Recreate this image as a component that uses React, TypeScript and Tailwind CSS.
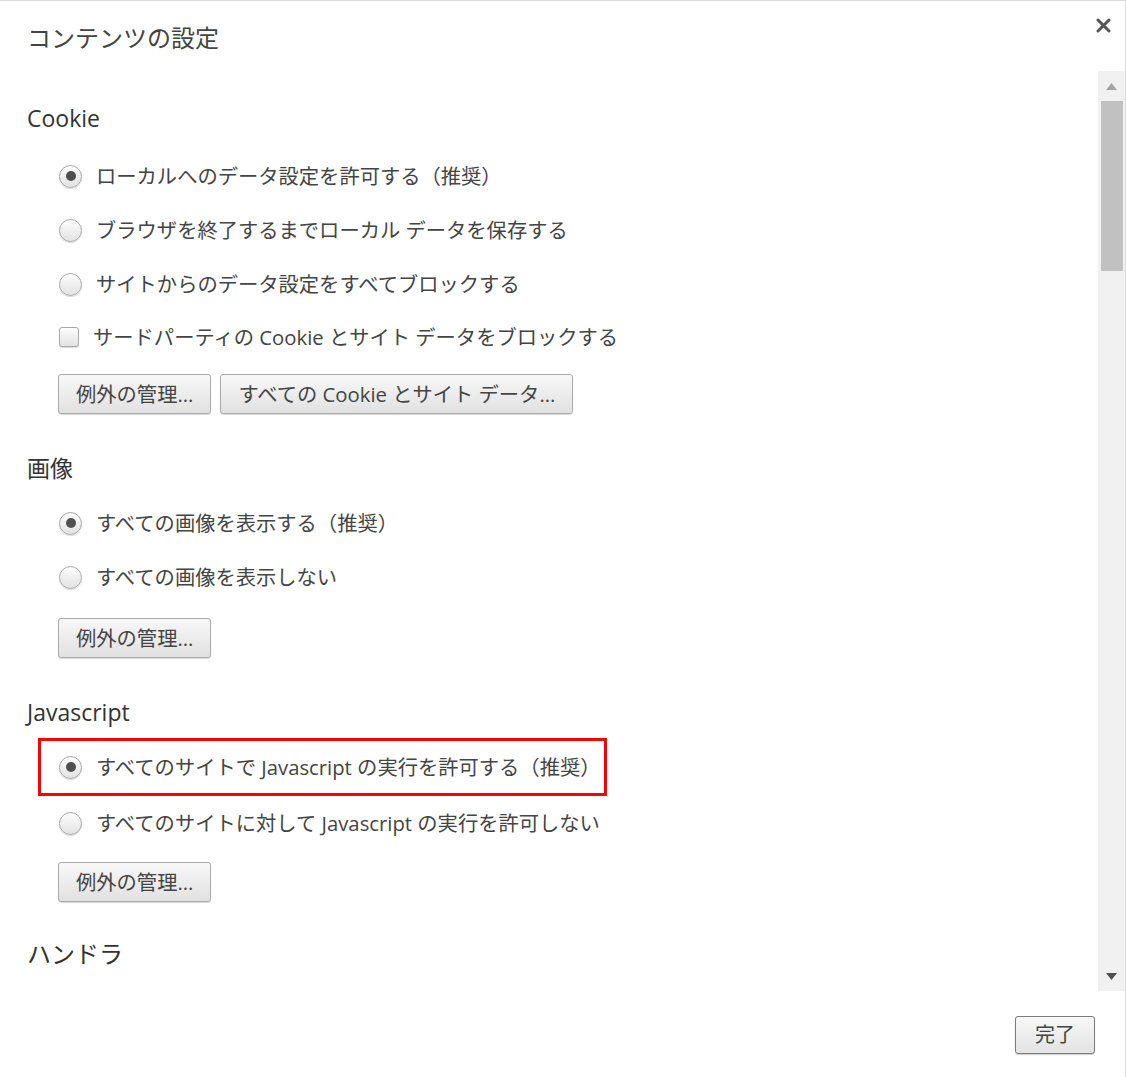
import React from "react";

const Radio = ({ checked }: { checked?: boolean }) => (
  <span className="w-[23px] h-[23px] rounded-full border border-[#a8a8a8] bg-gradient-to-b from-[#fdfdfd] to-[#e2e2e2] shadow-[0_1px_1px_rgba(0,0,0,0.15)] flex items-center justify-center shrink-0">
    {checked && <span className="w-[10px] h-[10px] rounded-full bg-[#4f4f4f]" />}
  </span>
);

const Checkbox = () => (
  <span className="w-[20px] h-[20px] rounded-[3px] border border-[#a8a8a8] bg-gradient-to-b from-[#fdfdfd] to-[#e2e2e2] shadow-[0_1px_1px_rgba(0,0,0,0.15)] shrink-0" />
);

const Btn = ({ children, className = "" }: { children: React.ReactNode; className?: string }) => (
  <button
    className={
      "h-[40px] px-[17px] rounded-[3px] border border-[#aaaaaa] bg-gradient-to-b from-[#f8f8f8] to-[#e1e1e1] shadow-[0_1px_1px_rgba(0,0,0,0.15)] text-[20.3px] text-[#444] " +
      className
    }
  >
    {children}
  </button>
);

const Heading = ({ children, className = "" }: { children: React.ReactNode; className?: string }) => (
  <div className={"h-[32px] flex items-center text-[23px] text-[#333] " + className}>{children}</div>
);

const Option = ({ label, checked }: { label: string; checked?: boolean }) => (
  <div className="h-[54px] flex items-center pl-[32px] gap-[14px] text-[20.3px] text-[#444]">
    <Radio checked={checked} />
    <span>{label}</span>
  </div>
);

export default function App() {
  return (
    <div className="w-[1126px] h-[1077px] bg-white flex flex-col border-t border-r border-[#dcdcdc] font-['Open_Sans','Noto_Sans_CJK_JP',sans-serif] overflow-hidden">
      {/* header */}
      <div className="h-[70px] flex items-start justify-between pl-[27px] pr-[14px]">
        <div className="mt-[21px] text-[24px] leading-[32px] text-[#444]">コンテンツの設定</div>
        <svg className="mt-[17px]" width="15" height="15" viewBox="0 0 15 15">
          <path d="M2 2 L13 13 M13 2 L2 13" stroke="#555" strokeWidth="3" strokeLinecap="round" />
        </svg>
      </div>

      {/* body */}
      <div className="h-[920px] flex">
        <div className="flex-1 pl-[27px] pt-[31px]">
          <Heading>Cookie</Heading>
          <div className="mt-[15px]">
            <Option label="ローカルへのデータ設定を許可する（推奨）" checked />
            <Option label="ブラウザを終了するまでローカル データを保存する" />
            <Option label="サイトからのデータ設定をすべてブロックする" />
            <div className="h-[52px] flex items-center pl-[32px] gap-[14px] text-[20.3px] text-[#444]">
              <Checkbox />
              <span>サードパーティの Cookie とサイト データをブロックする</span>
            </div>
          </div>
          <div className="flex gap-[9px] pl-[31px] mt-[11px]">
            <Btn>例外の管理...</Btn>
            <Btn>すべての Cookie とサイト データ...</Btn>
          </div>

          <Heading className="mt-[38px]">画像</Heading>
          <div className="mt-[12px]">
            <Option label="すべての画像を表示する（推奨）" checked />
            <Option label="すべての画像を表示しない" />
          </div>
          <div className="flex pl-[31px] mt-[14px]">
            <Btn>例外の管理...</Btn>
          </div>

          <Heading className="mt-[38px]">Javascript</Heading>
          <div className="mt-[10px] ml-[11px] w-[569px] h-[58px] border-[3px] border-[#f00] flex items-center pl-[18px] gap-[14px] text-[20.3px] text-[#444]">
            <Radio checked />
            <span>すべてのサイトで Javascript の実行を許可する（推奨）</span>
          </div>
          <Option label="すべてのサイトに対して Javascript の実行を許可しない" />
          <div className="flex pl-[31px] mt-[12px]">
            <Btn>例外の管理...</Btn>
          </div>

          <Heading className="mt-[36px] text-[24px]">ハンドラ</Heading>
        </div>

        {/* scrollbar */}
        <div className="w-[27px] bg-[#f1f1f1] flex flex-col items-center">
          <div className="h-[30px] flex items-center justify-center">
            <svg width="11" height="7" viewBox="0 0 11 7">
              <path d="M0 7 L5.5 0 L11 7 Z" fill="#a3a3a3" />
            </svg>
          </div>
          <div className="w-[22px] h-[170px] bg-[#c1c1c1]" />
          <div className="flex-1" />
          <div className="h-[30px] flex items-center justify-center">
            <svg width="11" height="7" viewBox="0 0 11 7">
              <path d="M0 0 L11 0 L5.5 7 Z" fill="#505050" />
            </svg>
          </div>
        </div>
      </div>

      {/* footer */}
      <div className="flex-1 flex justify-end items-start pr-[30px] pt-[25px]">
        <button className="w-[80px] h-[38px] rounded-[3px] border border-[#7a7a7a] bg-gradient-to-b from-[#f8f8f8] to-[#e3e3e3] shadow-[0_1px_1px_rgba(0,0,0,0.2)] text-[20px] text-[#444]">
          完了
        </button>
      </div>
    </div>
  );
}
